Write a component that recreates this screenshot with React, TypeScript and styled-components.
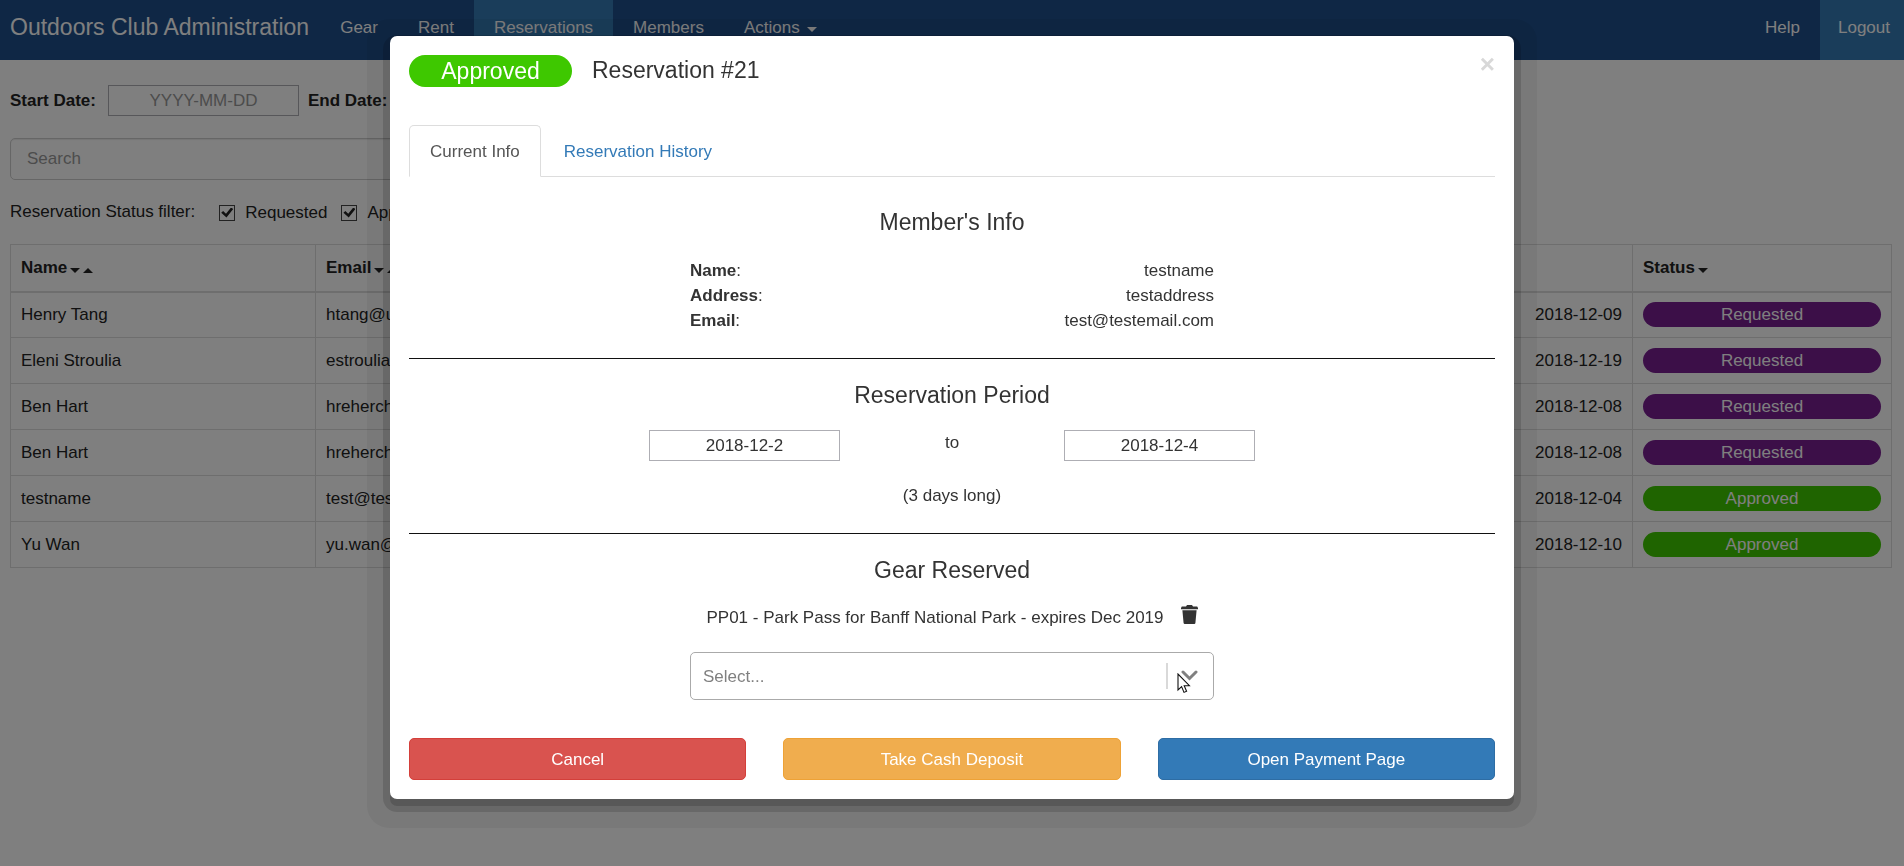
import React from "react";
import styled, { createGlobalStyle } from "styled-components";

const GlobalStyle = createGlobalStyle`
  *, *::before, *::after { box-sizing: border-box; }
  html, body { height: 100%; }
  body {
    margin: 0;
    background: #fff;
    color: #333;
    font-family: "Liberation Sans", Arial, sans-serif;
    font-size: 17px;
    line-height: 25px;
    overflow: hidden;
  }
  input, select, button { font: inherit; color: inherit; }
`;

/* ---------- Page ---------- */

const Navbar = styled.nav`
  display: flex;
  height: 60px;
  background: #1e4e8a;
  color: #fff;
`;

const Brand = styled.a`
  padding: 15px 11px 20px 10px;
  font-size: 23px;
  color: inherit;
  text-decoration: none;
  white-space: nowrap;
`;

const NavList = styled.ul<{ $end?: boolean }>`
  display: flex;
  margin: 0 0 0 ${(p) => (p.$end ? "auto" : "0")};
  padding: 0;
  list-style: none;
`;

const NavLink = styled.a<{ $active?: boolean; $last?: boolean }>`
  display: flex;
  align-items: center;
  gap: 7px;
  height: 60px;
  padding: 0 ${(p) => (p.$last ? "14px 5px 18px" : "20px 5px 20px")};
  background: ${(p) => (p.$active ? "#347ab4" : "transparent")};
  color: inherit;
  text-decoration: none;
`;

const Caret = styled.span<{ $up?: boolean }>`
  display: inline-block;
  margin-top: 3px;
  border: 5px solid transparent;
  border-${(p) => (p.$up ? "bottom" : "top")}-color: currentColor;
  border-${(p) => (p.$up ? "top" : "bottom")}-width: 0;
  vertical-align: middle;
`;

const Content = styled.main`
  padding: 25px 12px 0 10px;
  color: #222;
`;

const DateFilters = styled.div`
  display: flex;
  align-items: center;
  gap: 9px;
`;

const DateLabel = styled.label`
  margin-right: 3px;
  font-weight: 700;
`;

const DateInput = styled.input`
  width: 191px;
  height: 31px;
  padding: 0;
  border: 1px solid #aeaeb4;
  border-radius: 0;
  background: #fff;
  text-align: center;
  &::placeholder { color: #999; opacity: 1; }
`;

const SearchInput = styled.input`
  display: block;
  width: 50%;
  height: 42px;
  margin-top: 22px;
  padding: 0 16px;
  border: 1px solid #ccc;
  border-radius: 5px;
  background: #fff;
  box-shadow: inset 0 1px 1px rgba(0, 0, 0, 0.08);
  &::placeholder { color: #999; opacity: 1; }
`;

const StatusFilters = styled.div`
  display: flex;
  margin-top: 19px;
`;

const FilterTitle = styled.span`
  margin-right: 24px;
`;

const CheckLabel = styled.label`
  display: flex;
  align-items: center;
  gap: 10px;
  margin-right: 14px;
  padding-top: 1px;
`;

const CheckInput = styled.input`
  appearance: none;
  display: grid;
  place-content: center;
  width: 16px;
  height: 16px;
  margin: 0;
  border: 1px solid #444;
  background: #fff;
  &:checked::before {
    content: "";
    width: 12px;
    height: 10px;
    background: #222;
    clip-path: polygon(0 52%, 16% 36%, 40% 62%, 82% 0, 100% 14%, 44% 100%);
  }
`;

const Table = styled.table`
  width: 100%;
  margin-top: 19px;
  border-collapse: collapse;
  table-layout: fixed;
  th, td {
    height: 46px;
    padding: 0 10px;
    border: 1px solid #ddd;
    text-align: left;
    white-space: nowrap;
  }
  th { height: 47px; border-bottom-width: 2px; }
  thead th:nth-child(4), td:nth-child(4) { border-left: 0; }
`;

const Col = styled.col<{ $w?: string }>`
  width: ${(p) => p.$w ?? "auto"};
`;

const DateCell = styled.td`
  && { text-align: right; }
`;

const statusColors = { Requested: "#781e90", Approved: "#3ec800" };
type Status = keyof typeof statusColors;

const Pill = styled.span<{ $status: Status; $large?: boolean }>`
  display: block;
  width: ${(p) => (p.$large ? "163px" : "auto")};
  border-radius: 16px;
  background: ${(p) => statusColors[p.$status]};
  color: #fff;
  font-size: ${(p) => (p.$large ? "23px" : "17px")};
  line-height: ${(p) => (p.$large ? "32px" : "25px")};
  text-align: center;
`;

/* ---------- Modal ---------- */

const Backdrop = styled.div`
  position: fixed;
  inset: 0;
  padding: 36px 20px;
  background: rgba(0, 0, 0, 0.5);
`;

const Dialog = styled.section`
  position: relative;
  max-width: 1124px;
  margin: 0 auto;
  padding: 19px;
  border-radius: 7px;
  background: #fff;
  box-shadow:
    0 7px 0 0 rgba(0, 0, 0, 0.16),
    0 6px 0 7px rgba(0, 0, 0, 0.14),
    0 6px 0 23px rgba(0, 0, 0, 0.05);
`;

const DialogHeader = styled.header`
  display: flex;
  align-items: flex-start;
  gap: 20px;
`;

const DialogTitle = styled.h2`
  flex: 1;
  margin: 0;
  font-size: 23px;
  font-weight: 400;
  line-height: 30px;
`;

const CloseButton = styled.button`
  margin: 0;
  padding: 0;
  border: 0;
  background: none;
  color: #d8d8d8;
  font-size: 26px;
  font-weight: 700;
  line-height: 18px;
`;

const Tabs = styled.div`
  display: flex;
  gap: 2px;
  margin-top: 38px;
  border-bottom: 1px solid #ddd;
`;

const Tab = styled.button<{ $active?: boolean }>`
  height: 52px;
  margin-bottom: -1px;
  padding: 0 20px;
  border: 1px solid ${(p) => (p.$active ? "#ddd" : "transparent")};
  border-bottom-color: ${(p) => (p.$active ? "#fff" : "transparent")};
  border-radius: 5px 5px 0 0;
  background: ${(p) => (p.$active ? "#fff" : "none")};
  color: ${(p) => (p.$active ? "#555" : "#337ab7")};
`;

const Section = styled.section`
  display: flex;
  flex-direction: column;
  align-items: center;
  padding: 24px 0 25px;
  & + & { border-top: 1px solid #111; }
`;

const SectionTitle = styled.h3`
  margin: 0;
  font-size: 23px;
  font-weight: 400;
  line-height: 25px;
`;

const MemberSection = styled(Section)`
  padding-top: 33px;
`;

const InfoList = styled.dl`
  width: 100%;
  max-width: 524px;
  margin: 23px 0 0;
`;

const InfoRow = styled.div`
  display: flex;
  justify-content: space-between;
  dd { margin: 0; }
`;

const Period = styled.div`
  display: flex;
  justify-content: space-between;
  width: 100%;
  max-width: 606px;
  margin-top: 22px;
`;

const Duration = styled.p`
  margin: 22px 0 0;
`;

const GearRow = styled.div`
  display: flex;
  align-items: center;
  gap: 17px;
  margin-top: 22px;
`;

const IconButton = styled.button`
  display: flex;
  padding: 0 0 6px;
  border: 0;
  background: none;
`;

const SelectBox = styled.div`
  position: relative;
  display: flex;
  align-items: center;
  width: 100%;
  max-width: 524px;
  height: 48px;
  margin-top: 22px;
  padding-right: 14px;
  border: 1px solid #aaa;
  border-radius: 5px;
`;

const GearSelect = styled.select`
  appearance: none;
  flex: 1;
  height: 100%;
  padding: 0 12px;
  border: 0;
  background: none;
  color: #808080;
`;

const Separator = styled.span`
  width: 2px;
  height: 26px;
  margin-right: 12px;
  background: #d9d9d9;
`;

const Pointer = styled.svg`
  position: absolute;
  right: 22px;
  top: 20px;
`;

const Actions = styled.footer`
  display: grid;
  grid-template-columns: repeat(3, 1fr);
  gap: 37px;
  margin-top: 13px;
`;

const ActionButton = styled.button<{ $bg: string; $border: string }>`
  height: 42px;
  border: 1px solid ${(p) => p.$border};
  border-radius: 5px;
  background: ${(p) => p.$bg};
  color: #fff;
`;

const Trash = () => (
  <svg width="17" height="19" viewBox="0 0 17 19" fill="#333" aria-hidden="true">
    <path d="M5 1.5 6 0h5l1 1.5h4.2L17 3v1.2H0V3l.8-1.5z" />
    <path d="M1.4 5.2h14.2L14.4 18q-.1 1-1.1 1H3.7q-1 0-1.1-1z" />
  </svg>
);

const reservations: { name: string; email: string; end: string; status: Status }[] = [
  { name: "Henry Tang", email: "htang@ualberta.ca", end: "2018-12-09", status: "Requested" },
  { name: "Eleni Stroulia", email: "estroulia@ualberta.ca", end: "2018-12-19", status: "Requested" },
  { name: "Ben Hart", email: "hreherch@ualberta.ca", end: "2018-12-08", status: "Requested" },
  { name: "Ben Hart", email: "hreherch@ualberta.ca", end: "2018-12-08", status: "Requested" },
  { name: "testname", email: "test@testemail.com", end: "2018-12-04", status: "Approved" },
  { name: "Yu Wan", email: "yu.wan@ualberta.ca", end: "2018-12-10", status: "Approved" },
];

const SortCarets = styled.span`
  display: inline-flex;
  gap: 3px;
  margin-left: 3px;
  vertical-align: middle;
`;

const member = [
  ["Name", "testname"],
  ["Address", "testaddress"],
  ["Email", "test@testemail.com"],
];

export default function App() {
  return (
    <>
      <GlobalStyle />
      <Navbar>
        <Brand href="#">Outdoors Club Administration</Brand>
        <NavList>
          <li><NavLink href="#">Gear</NavLink></li>
          <li><NavLink href="#">Rent</NavLink></li>
          <li><NavLink href="#" $active>Reservations</NavLink></li>
          <li><NavLink href="#">Members</NavLink></li>
          <li><NavLink href="#">Actions <Caret /></NavLink></li>
        </NavList>
        <NavList $end>
          <li><NavLink href="#">Help</NavLink></li>
          <li><NavLink href="#" $active $last>Logout</NavLink></li>
        </NavList>
      </Navbar>

      <Content>
        <DateFilters>
          <DateLabel htmlFor="start">Start Date:</DateLabel>
          <DateInput id="start" placeholder="YYYY-MM-DD" />
          <DateLabel htmlFor="end">End Date:</DateLabel>
          <DateInput id="end" placeholder="YYYY-MM-DD" />
        </DateFilters>
        <SearchInput placeholder="Search" aria-label="Search" />
        <StatusFilters>
          <FilterTitle>Reservation Status filter:</FilterTitle>
          <CheckLabel><CheckInput type="checkbox" defaultChecked />Requested</CheckLabel>
          <CheckLabel><CheckInput type="checkbox" defaultChecked />Approved</CheckLabel>
        </StatusFilters>
        <Table>
          <colgroup>
            <Col $w="305px" />
            <Col $w="305px" />
            <Col />
            <Col />
            <Col $w="259px" />
          </colgroup>
          <thead>
            <tr>
              <th>Name<SortCarets><Caret /><Caret $up /></SortCarets></th>
              <th>Email<SortCarets><Caret /><Caret $up /></SortCarets></th>
              <th />
              <th />
              <th>Status<SortCarets><Caret /></SortCarets></th>
            </tr>
          </thead>
          <tbody>
            {reservations.map((r, i) => (
              <tr key={i}>
                <td>{r.name}</td>
                <td>{r.email}</td>
                <td />
                <DateCell>{r.end}</DateCell>
                <td><Pill $status={r.status}>{r.status}</Pill></td>
              </tr>
            ))}
          </tbody>
        </Table>
      </Content>

      <Backdrop>
        <Dialog role="dialog" aria-labelledby="dialog-title">
          <DialogHeader>
            <Pill $status="Approved" $large>Approved</Pill>
            <DialogTitle id="dialog-title">Reservation #21</DialogTitle>
            <CloseButton aria-label="Close">×</CloseButton>
          </DialogHeader>
          <Tabs role="tablist">
            <Tab role="tab" aria-selected $active>Current Info</Tab>
            <Tab role="tab" aria-selected={false}>Reservation History</Tab>
          </Tabs>

          <MemberSection>
            <SectionTitle>Member's Info</SectionTitle>
            <InfoList>
              {member.map(([label, value]) => (
                <InfoRow key={label}>
                  <dt><b>{label}</b>:</dt>
                  <dd>{value}</dd>
                </InfoRow>
              ))}
            </InfoList>
          </MemberSection>

          <Section>
            <SectionTitle>Reservation Period</SectionTitle>
            <Period>
              <DateInput aria-label="Reservation start" defaultValue="2018-12-2" />
              <span>to</span>
              <DateInput aria-label="Reservation end" defaultValue="2018-12-4" />
            </Period>
            <Duration>(3 days long)</Duration>
          </Section>

          <Section>
            <SectionTitle>Gear Reserved</SectionTitle>
            <GearRow>
              <span>PP01 - Park Pass for Banff National Park - expires Dec 2019</span>
              <IconButton aria-label="Remove gear"><Trash /></IconButton>
            </GearRow>
            <SelectBox>
              <GearSelect aria-label="Gear">
                <option>Select...</option>
              </GearSelect>
              <Separator />
              <svg width="19" height="12" viewBox="0 0 19 12" fill="none" stroke="#808080" strokeWidth="3" strokeLinecap="round" aria-hidden="true">
                <path d="m3 2 6.5 6.5L16 2" />
              </svg>
              <Pointer width="14" height="21" viewBox="0 0 14 21" aria-hidden="true">
                <path d="M1 1v16l3.6-3.4L7 19.4l2.6-1.1-2.4-5.6h5.2z" fill="#fff" stroke="#111" strokeWidth="1.1" />
              </Pointer>
            </SelectBox>
          </Section>

          <Actions>
            <ActionButton $bg="#d9534f" $border="#d43f3a">Cancel</ActionButton>
            <ActionButton $bg="#f0ad4e" $border="#eea236">Take Cash Deposit</ActionButton>
            <ActionButton $bg="#337ab7" $border="#2e6da4">Open Payment Page</ActionButton>
          </Actions>
        </Dialog>
      </Backdrop>
    </>
  );
}
